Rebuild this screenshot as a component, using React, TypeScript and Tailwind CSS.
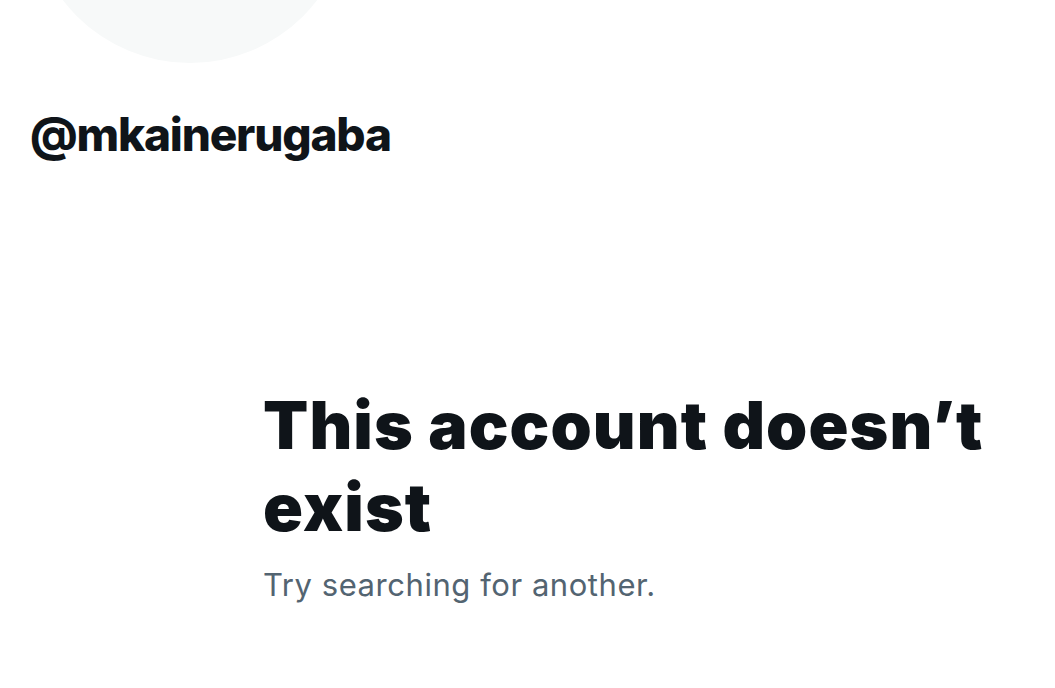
import React from "react";

export default function App() {
  return (
    <div
      className="w-[1055px] h-[688px] bg-white overflow-hidden"
      style={{ fontFamily: "Inter, 'Noto Sans', sans-serif" }}
    >
      <div className="pl-[30px]">
        <div className="w-[320px] h-[320px] rounded-full bg-[#f7f9f9] -mt-[257px]" />
        <div className="mt-[48px] text-[46px] leading-[47px] font-extrabold tracking-[-1.2px] text-[#0f1419]">
          @mkainerugaba
        </div>
      </div>
      <div className="pl-[263px] mt-[226px]">
        <h1 className="text-[66px] leading-[82px] font-black tracking-[1.1px] text-[#0f1419] w-[780px]">
          This account doesn’t exist
        </h1>
        <p className="mt-[19px] text-[31px] leading-[36px] tracking-[0.55px] text-[#536471]">
          Try searching for another.
        </p>
      </div>
    </div>
  );
}
